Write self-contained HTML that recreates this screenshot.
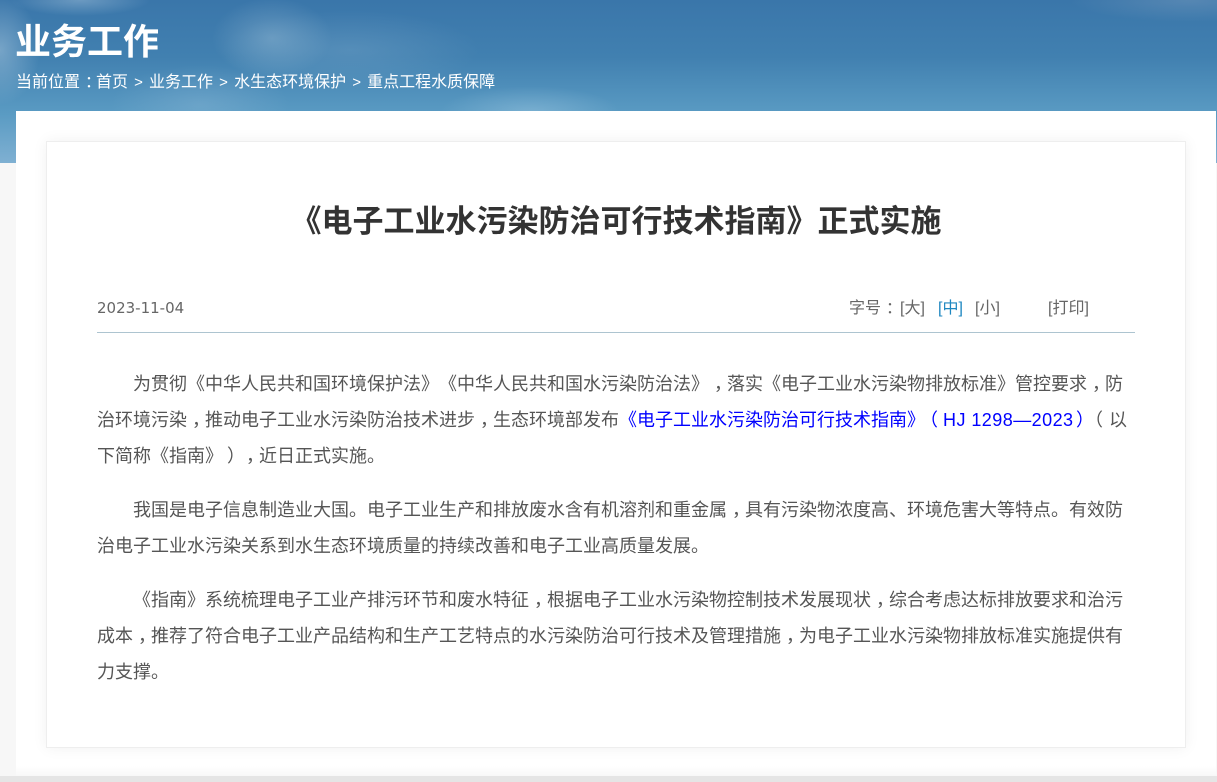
<!DOCTYPE html>
<html lang="zh-CN">
<head>
<meta charset="utf-8">
<title>《电子工业水污染防治可行技术指南》正式实施</title>
<style>
*{margin:0;padding:0;box-sizing:border-box}
html,body{width:1217px;height:782px;overflow:hidden;background:#f7f7f7;font-family:"Liberation Sans","Noto Sans CJK SC",sans-serif;text-spacing-trim:space-all}
#hd{position:absolute;left:0;top:0;width:1217px;height:163px;
background:
radial-gradient(ellipse 60px 40px at 272px 38px,rgba(190,215,230,.3),transparent),
radial-gradient(ellipse 130px 40px at 350px 50px,rgba(180,210,230,.18),transparent),
radial-gradient(ellipse 70px 16px at 80px 0px,rgba(200,220,235,.35),transparent),
radial-gradient(ellipse 40px 55px at 0px 50px,rgba(200,220,235,.4),transparent),
radial-gradient(ellipse 90px 40px at 200px 105px,rgba(190,215,235,.2),transparent),
radial-gradient(ellipse 90px 26px at 530px 112px,rgba(180,215,235,.35),transparent),
radial-gradient(ellipse 120px 22px at 1190px 0px,rgba(170,185,205,.25),transparent),
linear-gradient(180deg,#3a76aa 0%,#4180b0 35%,#5a9bc3 70%,#7fb0d2 100%);}
#wrap{position:absolute;left:16px;top:111px;width:1200px;height:665px;background:#fff}
#foot{position:absolute;left:0;top:776px;width:1217px;height:6px;background:#e5e5e5}
#fade{position:absolute;left:16px;top:766px;width:1200px;height:10px;background:linear-gradient(#fff,#f8f8f8)}
#card{position:absolute;left:46px;top:141px;width:1140px;height:607px;background:#fff;border:1px solid #eee;box-shadow:0 0 14px rgba(0,0,0,.06)}
.a{position:absolute;white-space:nowrap}
#h1{left:15px;top:18px;font-size:36px;line-height:48px;font-weight:700;color:#fff}
#crumb{left:16px;top:72px;font-size:16px;line-height:22px;color:#fff}
#crumb i{font-style:normal;display:inline-block;width:21px;text-align:center;font-size:15px}
#tt{left:46px;top:199px;width:1140px;text-align:center;font-size:31px;line-height:46px;font-weight:700;color:#333}
#date{left:97px;top:297px;font-size:15px;line-height:22px;color:#666;font-family:"DejaVu Sans",sans-serif}
.t{top:298px;font-size:16px;line-height:22px;color:#666}
#rule{position:absolute;left:97px;top:332px;width:1038px;height:1px;background:#adc4d0}
.p{position:absolute;left:97px;font-size:18px;line-height:36px;color:#555;white-space:nowrap}
.p a{color:#00f;text-decoration:none}
u{text-decoration:none;position:relative;left:5px}
.s{position:absolute;top:0}
</style>
</head>
<body>
<div id="hd"></div>
<div class="a" id="h1">业务工作</div>
<div class="a" id="crumb">当前位置<u>：</u>首页<i>&gt;</i>业务工作<i>&gt;</i>水生态环境保护<i>&gt;</i>重点工程水质保障</div>
<div id="wrap"></div>
<div id="fade"></div>
<div id="foot"></div>
<div id="card"></div>
<div class="a" id="tt">《电子工业水污染防治可行技术指南》正式实施</div>
<div class="a" id="date">2023-11-04</div>
<div class="a t" style="left:849px">字号<u>：</u></div>
<div class="a t" style="left:900px">[大]</div>
<div class="a t" style="left:938px;color:#1e87c0">[中]</div>
<div class="a t" style="left:975px">[小]</div>
<div class="a t" style="left:1048px">[打印]</div>
<div id="rule"></div>
<div class="p" style="top:366px;left:133px">为贯彻《中华人民共和国环境保护法》《中华人民共和国水污染防治法》<u>，</u>落实《电子工业水污染物排放标准》管控要求<u>，</u>防</div>
<div class="p" style="top:402px;width:1038px;height:36px">治环境污染<u>，</u>推动电子工业水污染防治技术进步<u>，</u>生态环境部发布<a>《电子工业水污染防治可行技术指南》</a><a class="s" style="left:823px">（</a><a class="s" style="left:846px;letter-spacing:.45px">HJ 1298—2023</a><a class="s" style="left:979px">）</a><span class="s" style="left:988px">（</span><span class="s" style="left:1012px">以</span></div>
<div class="p" style="top:438px">下简称《指南》<u style="left:4px">）</u><u>，</u>近日正式实施。</div>
<div class="p" style="top:492px;left:133px">我国是电子信息制造业大国。电子工业生产和排放废水含有机溶剂和重金属<u>，</u>具有污染物浓度高、环境危害大等特点。有效防</div>
<div class="p" style="top:528px">治电子工业水污染关系到水生态环境质量的持续改善和电子工业高质量发展。</div>
<div class="p" style="top:582px;left:133px">《指南》系统梳理电子工业产排污环节和废水特征<u>，</u>根据电子工业水污染物控制技术发展现状<u>，</u>综合考虑达标排放要求和治污</div>
<div class="p" style="top:618px">成本<u>，</u>推荐了符合电子工业产品结构和生产工艺特点的水污染防治可行技术及管理措施<u>，</u>为电子工业水污染物排放标准实施提供有</div>
<div class="p" style="top:654px">力支撑。</div>
</body>
</html>
